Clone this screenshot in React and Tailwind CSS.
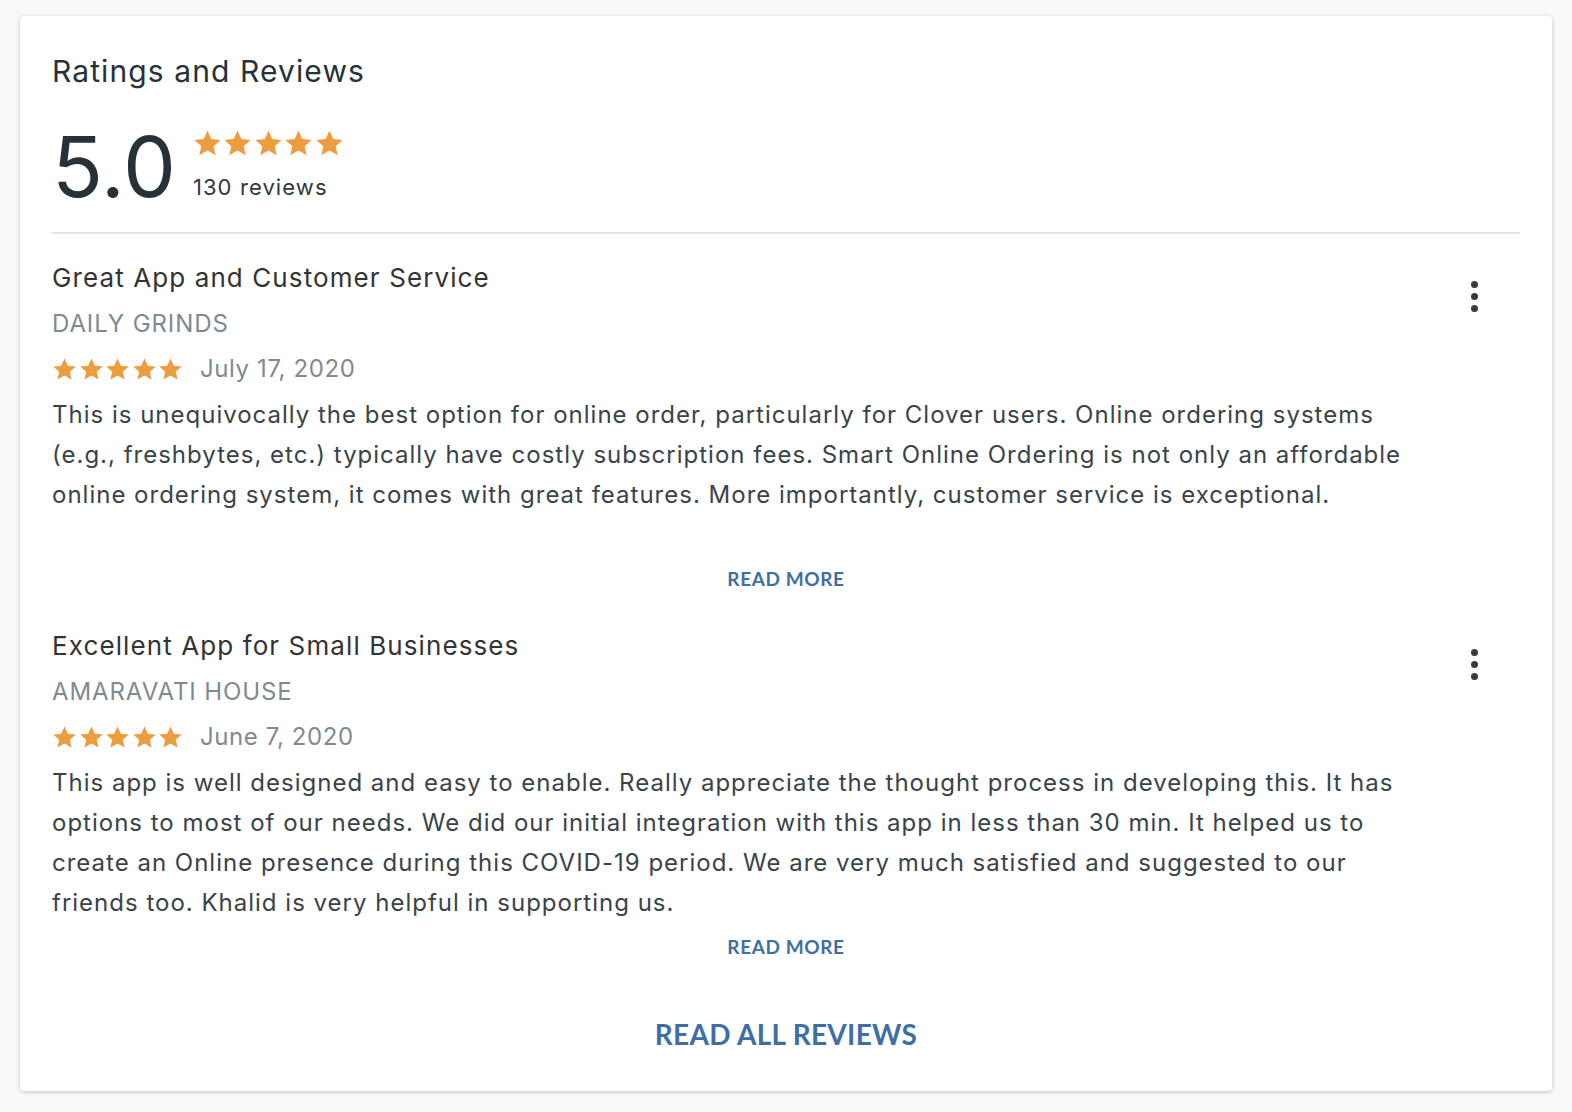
//Imports
import React from "react";

//Star
const Star = ({ size }) => (
  <svg width={size} height={size} viewBox="0 0 24 24" className="shrink-0">
    <path
      d="M12 1.4l3.2 6.9 7.6.8-5.7 5.1 1.7 7.5L12 17.8l-6.8 3.9 1.7-7.5-5.7-5.1 7.6-.8z"
      fill="#ee9d3e"
    />
  </svg>
);

//Stars
const Stars = ({ size, className }) => (
  <div className={className}>
    {[0, 1, 2, 3, 4].map((i) => (
      <Star key={i} size={size} />
    ))}
  </div>
);

//Kebab
const Kebab = () => (
  <button
    title="More"
    className="mt-[17px] mr-[22px] flex h-12 w-12 shrink-0 flex-col items-center justify-center gap-[5px]"
  >
    <span className="h-[7px] w-[7px] rounded-full bg-[#3a3a3a]" />
    <span className="h-[7px] w-[7px] rounded-full bg-[#3a3a3a]" />
    <span className="h-[7px] w-[7px] rounded-full bg-[#3a3a3a]" />
  </button>
);

//Review
const Review = ({ review }) => (
  <div className="flex flex-col">
    <div className="flex items-start justify-between">
      <div className="flex flex-col">
        <h3 className="text-[26px] leading-[46px] tracking-[1.1px] text-[#333333]">
          {review.title}
        </h3>
        <span className="text-[24px] leading-[46px] tracking-[0.9px] text-[#7f8a90]">
          {review.author}
        </span>
        <div className="flex h-[44px] items-center gap-[17px]">
          <Stars size={25} className="flex gap-[1.5px]" />
          <span className="text-[24px] tracking-[0.6px] text-[#7f8a90]">
            {review.date}
          </span>
        </div>
      </div>
      <Kebab />
    </div>
    <p className="mt-[4px] h-[160px] pr-[94px] text-[24px] leading-[40px] tracking-[1px] text-[#3a4348]">
      {review.body}
    </p>
    <button className="mt-[12px] self-center text-[19px] leading-[24px] font-bold tracking-[0.6px] text-[#3e6ea5] font-['Lato',sans-serif]">
      READ MORE
    </button>
  </div>
);

//App
const App = () => {
  //Objects
  const reviews = [
    {
      title: "Great App and Customer Service",
      author: "DAILY GRINDS",
      date: "July 17, 2020",
      body: "This is unequivocally the best option for online order, particularly for Clover users. Online ordering systems (e.g., freshbytes, etc.) typically have costly subscription fees. Smart Online Ordering is not only an affordable online ordering system, it comes with great features. More importantly, customer service is exceptional.",
    },
    {
      title: "Excellent App for Small Businesses",
      author: "AMARAVATI HOUSE",
      date: "June 7, 2020",
      body: "This app is well designed and easy to enable. Really appreciate the thought process in developing this. It has options to most of our needs. We did our initial integration with this app in less than 30 min. It helped us to create an Online presence during this COVID-19 period. We are very much satisfied and suggested to our friends too. Khalid is very helpful in supporting us.",
    },
  ];

  return (
    <div className="min-h-[1112px] bg-[#f9f9f9] px-5 pt-4 pb-6 font-['Inter',sans-serif]">
      <div className="rounded-[4px] bg-white px-8 pt-[37px] pb-[37px] shadow-[0_1px_4px_rgba(0,0,0,0.22)]">
        <h2 className="text-[30px] leading-[36px] tracking-[1.1px] text-[#263238]">
          Ratings and Reviews
        </h2>

        <div className="mt-9 flex items-start">
          <span className="text-[84px] leading-none text-[#263238]">5.0</span>
          <div className="ml-[17px] flex flex-col">
            <Stars size={29} className="mt-[4px] flex gap-[1.5px]" />
            <span className="mt-[14px] text-[22px] leading-[30px] tracking-[1.1px] text-[#2f383d]">
              130 reviews
            </span>
          </div>
        </div>

        <div className="mt-[23px] h-[2px] bg-[#e4e4e4]" />

        <div className="mt-[21px] flex flex-col gap-8">
          {reviews.map((r) => (
            <Review key={r.title} review={r} />
          ))}
        </div>

        <div className="mt-[55px] flex justify-center">
          <button className="text-[28px] leading-[40px] font-bold tracking-[0.3px] text-[#3e6ea5] font-['Lato',sans-serif]">
            READ ALL REVIEWS
          </button>
        </div>
      </div>
    </div>
  );
};

export default App;
